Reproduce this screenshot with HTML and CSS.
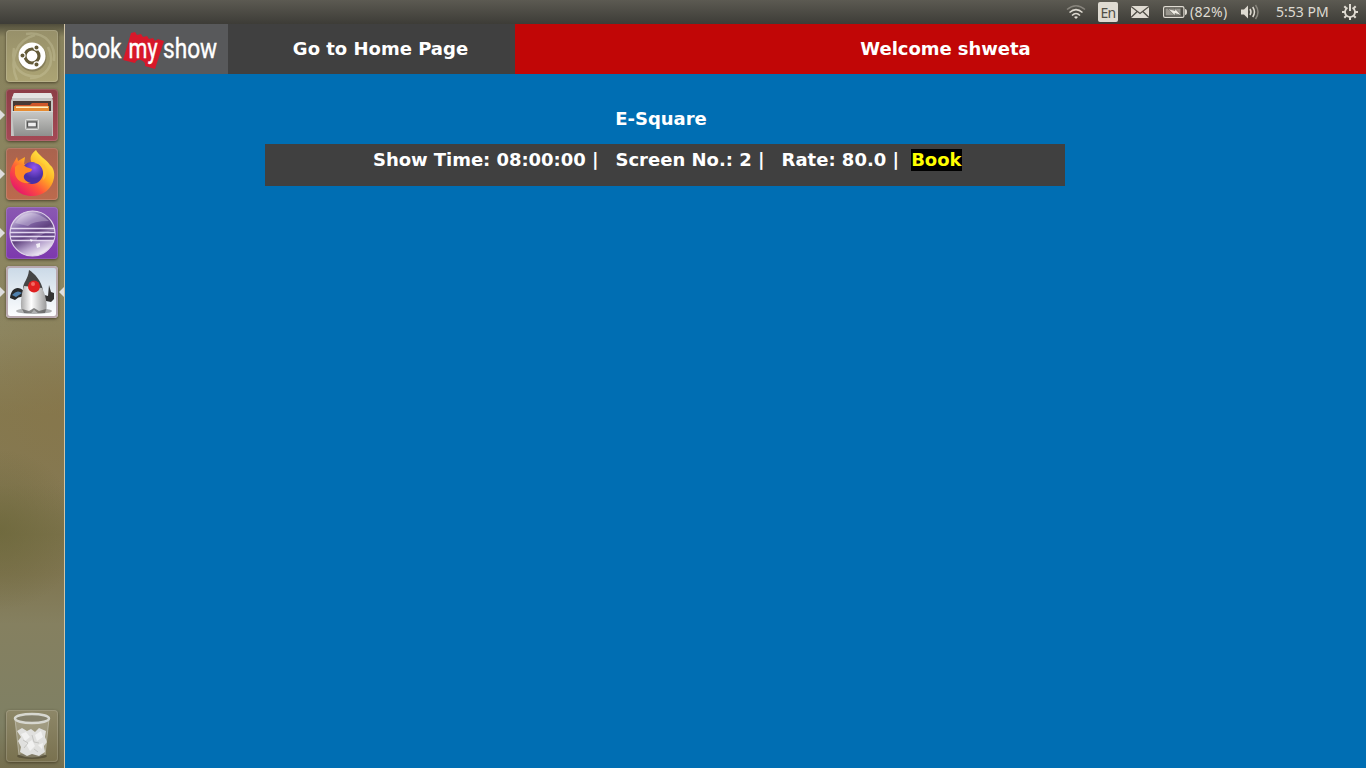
FILE: index.html
```html
<!DOCTYPE html>
<html lang="en">
<head>
<meta charset="utf-8">
<title>E-Square</title>
<link rel="stylesheet" href="styles.css">
</head>
<body>
<header class="panel">
  <svg class="wifi" width="20" height="16" viewBox="0 0 20 16" fill="none" stroke-width="1.5"><path d="M1 5.500Q10-2 19 5.500" stroke="#87847c"/><path d="M3.500 8.500Q10 2.800 16.500 8.500M6 11.500Q10 7.500 14 11.500" stroke="#dfdbd2"/><path d="M8 13Q10 11.300 12 13L10 15z" fill="#dfdbd2"/></svg>
  <span class="lang">En</span>
  <svg class="mail" width="18" height="12" viewBox="0 0 18 12"><path d="M0 0h18v12H0z" fill="#dfdbd2"/><path d="M0 .5l9 7 9-7M0 11.5l6.2-6M18 11.5l-6.2-6" fill="none" stroke="#504e47" stroke-width="1.3"/></svg>
  <svg class="battery" width="24" height="12" viewBox="0 0 24 12"><rect x=".6" y=".6" width="20.3" height="10.8" rx="1.5" fill="none" stroke="#dfdbd2" stroke-width="1.2"/><path d="M22 3q2 0 2 3t-2 3z" fill="#dfdbd2"/><path d="M2.5 2.5h15v7h-15z" fill="#99968e"/><path d="M5 2.800l7 1.700v-2l6.500 7-6.500-2v2.200z" fill="#efece4" stroke="#4b4942" stroke-width=".5"/></svg>
  <span class="charge">(82%)</span>
  <svg class="sound" width="20" height="16" viewBox="0 0 20 16"><path d="M1 5.500h3l4-4v13l-4-4H1z" fill="#dfdbd2"/><path d="M10 5q2 3 0 6M12.700 3q3.500 5 0 10" fill="none" stroke="#dfdbd2" stroke-width="1.500"/><path d="M15.500 1q5 7 0 14" fill="none" stroke="#87847c" stroke-width="1.500"/></svg>
  <span class="clock">5:53 PM</span>
  <svg class="gear" width="16" height="16" viewBox="0 0 16 16" fill="none" stroke="#dfdbd2"><path d="M5.500 3.700a5 5 0 1 0 5 0" stroke-width="1.800"/><path d="M8 0v7" stroke-width="2"/><path d="M0 8h3M13 8h3M8 13v3M2.300 2.300l2 2M13.700 2.300l-2 2M2.300 13.700l2-2M13.700 13.700l-2-2" stroke-width="2"/></svg>
</header>
<div class="desktop">
  <nav class="launcher">
    <div class="tile dash">
      <svg width="52" height="52" viewBox="0 0 52 52"><g fill="none" stroke="#d4cfad" stroke-opacity=".3" stroke-width="2.500"><path d="M11 50C2 29 11 10 29 5M20 4c20-3 30 12 28 27M42 17c9 18-3 31-18 31M8 18c-4 20 9 30 25 28"/></g><circle cx="26.500" cy="27.500" r="14" fill="#4f4930" opacity=".35"/><circle cx="26" cy="26" r="13.500" fill="#fff"/><circle cx="26" cy="26" r="7" fill="none" stroke="#635a38" stroke-width="3.200"/><g fill="#635a38" stroke="#fff" stroke-width="1.100"><circle cx="16.500" cy="25.500" r="2.600"/><circle cx="30.500" cy="17.500" r="2.600"/><circle cx="30.500" cy="34.500" r="2.600"/></g></svg>
    </div>
    <div class="tile files running">
      <svg width="52" height="52" viewBox="0 0 52 52"><defs><linearGradient id="cabinet" x2="0" y2="1"><stop stop-color="#c9c9c7"/><stop offset="1" stop-color="#8f908e"/></linearGradient></defs><path d="M8 4h37l2 8v35H5V12z" fill="#c5c5c3"/><path d="M8 4h37l2 5H6z" fill="#e4e4e2"/><path d="M7 12h38v11H7z" fill="#473a35"/><path d="M9 16h15l2-2h16v9H9z" fill="#cf5629"/><path d="M8 17h35v5H8z" fill="#e68b31"/><path d="M10 17.500h32V19H10z" fill="#fff0c5"/><path d="M6 22h41l-1 25H8z" fill="url(#cabinet)"/><path d="M6 22.500h41" stroke="#d8d8d6"/><rect x="19.500" y="30.500" width="13" height="10" rx="1" fill="#a9aaa8" stroke="#dfdfdd"/><rect x="21.500" y="33" width="9" height="5" fill="#eee" stroke="#565656" stroke-width="1.300"/></svg>
    </div>
    <div class="tile firefox running">
      <svg width="52" height="52" viewBox="0 0 52 52"><defs><linearGradient id="flame" x1=".9" y1=".1" x2=".2" y2=".95"><stop stop-color="#fff34b"/><stop offset=".4" stop-color="#ffad23"/><stop offset=".68" stop-color="#ff523c"/><stop offset="1" stop-color="#e5166c"/></linearGradient><radialGradient id="globe" cx=".6" cy=".25"><stop stop-color="#9457ef"/><stop offset="1" stop-color="#4930a6"/></radialGradient></defs><path d="M30 2c2 5 10 9 14 15 3 2 5 7 4 13C46 41 37 48 26 48 13 48 4 39 4 27c0-7 3-11 7-18l1 4 7-4-1 7 8-1c-3-5-1-9 4-13z" fill="url(#flame)"/><circle cx="26" cy="25" r="11" fill="url(#globe)"/><path d="M9 19c4-4 8-3 11 0l6 2c0 4-6 3-7 5-3 3 0 8 6 9-10 2-17-5-16-12z" fill="#ff8a26"/><path d="M28 15c8 0 12 9 9 17 6-5 4-14 0-16l-5-3z" fill="#ffc132"/></svg>
    </div>
    <div class="tile eclipse running">
      <svg width="52" height="52" viewBox="0 0 52 52"><defs><linearGradient id="orb" x1=".2" x2=".7" y2="1"><stop stop-color="#ece3f5"/><stop offset=".28" stop-color="#866cab"/><stop offset=".52" stop-color="#60417f"/><stop offset=".76" stop-color="#b9a6cf"/><stop offset="1" stop-color="#faf7fc"/></linearGradient></defs><circle cx="26.500" cy="26.500" r="22.500" fill="url(#orb)" stroke="#dfd4e9" stroke-width="1.200"/><path d="M9 16Q22-3 43 14Q27 14 22 19z" fill="#fff" opacity=".25"/><path d="M45 24q-14 4-15 10h17q3-6 1-10z" fill="#48266f" opacity=".7"/><path d="M5 21.500h43M4 25.500h45M4 29.500h45M5 33.500h43" stroke="#e2d7ef" stroke-width="1.300"/><path d="M30 37l4-1v4l-3 1zM24 32l3 1-2 2z" fill="#fff" opacity=".8"/></svg>
    </div>
    <div class="tile duke running focused">
      <svg width="52" height="52" viewBox="0 0 52 52"><defs><linearGradient id="belly"><stop stop-color="#aaa"/><stop offset=".4" stop-color="#fff"/><stop offset="1" stop-color="#999"/></linearGradient></defs><ellipse cx="28" cy="45" rx="18" ry="3" fill="#555" opacity=".45"/><path d="M18 25C12 19 5 22 4 32l5 2q4-4 9-3z" fill="#27292b"/><path d="M6 29q5-6 10-2l-6 4z" fill="#4f81ae"/><path d="M35 28l7 2 1-11 2 7 3 1v6l-3 3-10-2z" fill="#343434"/><path d="M23 4c5 3 13 11 14 21l-20-2c0-7 5-9 6-19z" fill="#454545"/><path d="M18 20c-3 9-4 20-2 26l8 1 4-3 5 3 7-1c2-8-1-19-4-24z" fill="url(#belly)"/><path d="M16 43l2 4h7l3-3 4 3h7l1-4-7 2-5-3-5 3z" fill="#555" opacity=".7"/><circle cx="28" cy="20.500" r="6" fill="#df2020"/><circle cx="27" cy="18" r="2" fill="#f36a62"/></svg>
    </div>
    <div class="tile trash">
      <svg width="52" height="52" viewBox="0 0 52 52"><ellipse cx="26" cy="46" rx="15" ry="3" fill="#47412f" opacity=".6"/><path d="M9 9l4 36q13 5 26 0l4-36z" fill="#d9d7ca" opacity=".3"/><path d="M11 21l5-3 5 3 4-2 4 3 4-4 7 3-1 6 2 5-3 4 1 6-6 4-7-2-5 2-7-4 1-5-3-6 3-4z" fill="#e0e0de"/><path d="M15 24l5-2 4 5-5 4zM29 25l6-4 2 6-6 4zM20 34l6-4 3 6-5 5zM32 35l5-2-1 6z" fill="#f1f1f0"/><path d="M17 30l5 3-4 5M26 25l2 7 5 1M28 39l4 3" fill="none" stroke="#c4c4c1"/><ellipse cx="26" cy="8.500" rx="17" ry="4.500" fill="#85816c" stroke="#d7d7d0" stroke-width="2.500"/><path d="M9 9l4 36M43 9l-4 36" stroke="#cfcdc0" stroke-opacity=".6"/></svg>
    </div>
  </nav>
  <main class="page">
    <div class="topnav">
      <a class="logo"><svg width="163" height="50" viewBox="0 0 163 50"><path d="M66 9l4-1 2 3 4-1 2 3 4-1 2 3 4-1 2 3 3-2 6 2-9 28-10-3q1-4-4-6-4-1-6 3l-12-3z" fill="#d7182a"/><g class="wordmark"><text transform="translate(6.500 34) scale(.81 1)">book</text><text transform="translate(63.500 34) scale(.77 1)">my</text><text transform="translate(98 34) scale(.81 1)">show</text></g></svg></a>
      <a class="home">Go to Home Page</a>
      <div class="welcome">Welcome shweta</div>
    </div>
    <h1 class="theatre">E-Square</h1>
    <div class="show"><span>Show Time: 08:00:00 |</span><span>Screen No.: 2 |</span><span>Rate: 80.0 |</span><a class="book">Book</a></div>
  </main>
</div>
</body>
</html>
```
FILE: styles.css
```css
* { box-sizing: border-box; }
body { margin: 0; width: 1366px; height: 768px; overflow: hidden; font: bold 18px/21px "DejaVu Sans", sans-serif; color: #fff; }
svg { display: block; flex: none; }
.panel { height: 24px; display: flex; align-items: center; justify-content: flex-end; padding-right: 8px; background: linear-gradient(#5c5a52, #3d3c37); color: #dfdbd2; font: 14px/24px "Noto Sans", sans-serif; white-space: nowrap; }
.lang { width: 20px; height: 20px; margin: 0 13px 0 12px; border-radius: 2px; background: #dfdbd2; color: #504e47; font-size: 14px; line-height: 21px; text-align: center; letter-spacing: -.7px; }
.battery { margin-left: 14px; }
.charge { width: 39px; margin-left: 3px; font-size: 14px; letter-spacing: .3px; }
.sound { margin-left: 11px; }
.clock { width: 54px; margin: 0 12px 0 16px; font-size: 14px; letter-spacing: 0; }
.desktop { height: 744px; display: flex; }
.launcher { width: 65px; padding: 6px 0 5px 6px; display: flex; flex-direction: column; gap: 7px; border-right: 1px solid #d1c4a6; background: radial-gradient(circle at 0 506px, #69653799 0, transparent 80px), radial-gradient(circle at 64px 382px, #87754999 0, transparent 110px), linear-gradient(#504d3b 0, #89835e 13px, #8d8661 310px, #85794f 390px, #857953 460px, #7b724a 510px, #7f7550 550px, #858060 600px, #7f8064 700px, #756e4e); }
.tile { position: relative; flex: none; width: 52px; height: 52px; border-radius: 4px; box-shadow: 0 1px 3px #4b432b, inset 0 0 0 1px #ffffff25; }
.dash { background: linear-gradient(#97906a, #aca474); }
.files { background: linear-gradient(#8c3e46, #a44955); }
.firefox { background: linear-gradient(#a9634e, #bc6a4d); }
.eclipse { background: linear-gradient(#8a59b2, #7d38ae); }
.duke { background: linear-gradient(#c9d8e6, #fff); box-shadow: 0 1px 3px #4b432b, inset 0 0 0 2px #b9a9af; }
.trash { margin-top: auto; margin-bottom: 1px; background: linear-gradient(#8d8768, #79714f); }
.running::before { content: ""; position: absolute; left: -6px; top: 21px; border: solid transparent; border-width: 5px 0 5px 5px; border-left-color: #dedede; }
.focused::after { content: ""; position: absolute; right: -6px; top: 21px; border: solid transparent; border-width: 5px 5px 5px 0; border-right-color: #dedede; }
.page { flex: 1; background: #006eb3; }
.topnav { height: 50px; display: flex; background: #c10606; line-height: 50px; text-align: center; }
.logo { width: 163px; height: 50px; background: #58595b; }
.wordmark { font: 400 28px/30px Roboto, sans-serif; fill: #fff; stroke: #fff; stroke-width: .4px; text-anchor: start; }
.home { width: 287px; height: 50px; padding-left: 18px; background: #404040; }
.welcome { flex: 1; padding-left: 10px; letter-spacing: -.05px; }
.theatre { margin: 34px 0 0; width: 1192px; font-size: 18px; line-height: 21px; text-align: center; }
.show { width: 800px; height: 42px; margin: 15px 0 0 200px; padding: 5px 0 0 108px; display: flex; background: #404040; white-space: nowrap; }
.show span { margin-right: 17px; }
.show span:first-child { letter-spacing: -.04px; }
.show span:nth-child(3) { margin-right: 12px; }
.book { height: 22px; background: #000; color: #ff0; }
```
